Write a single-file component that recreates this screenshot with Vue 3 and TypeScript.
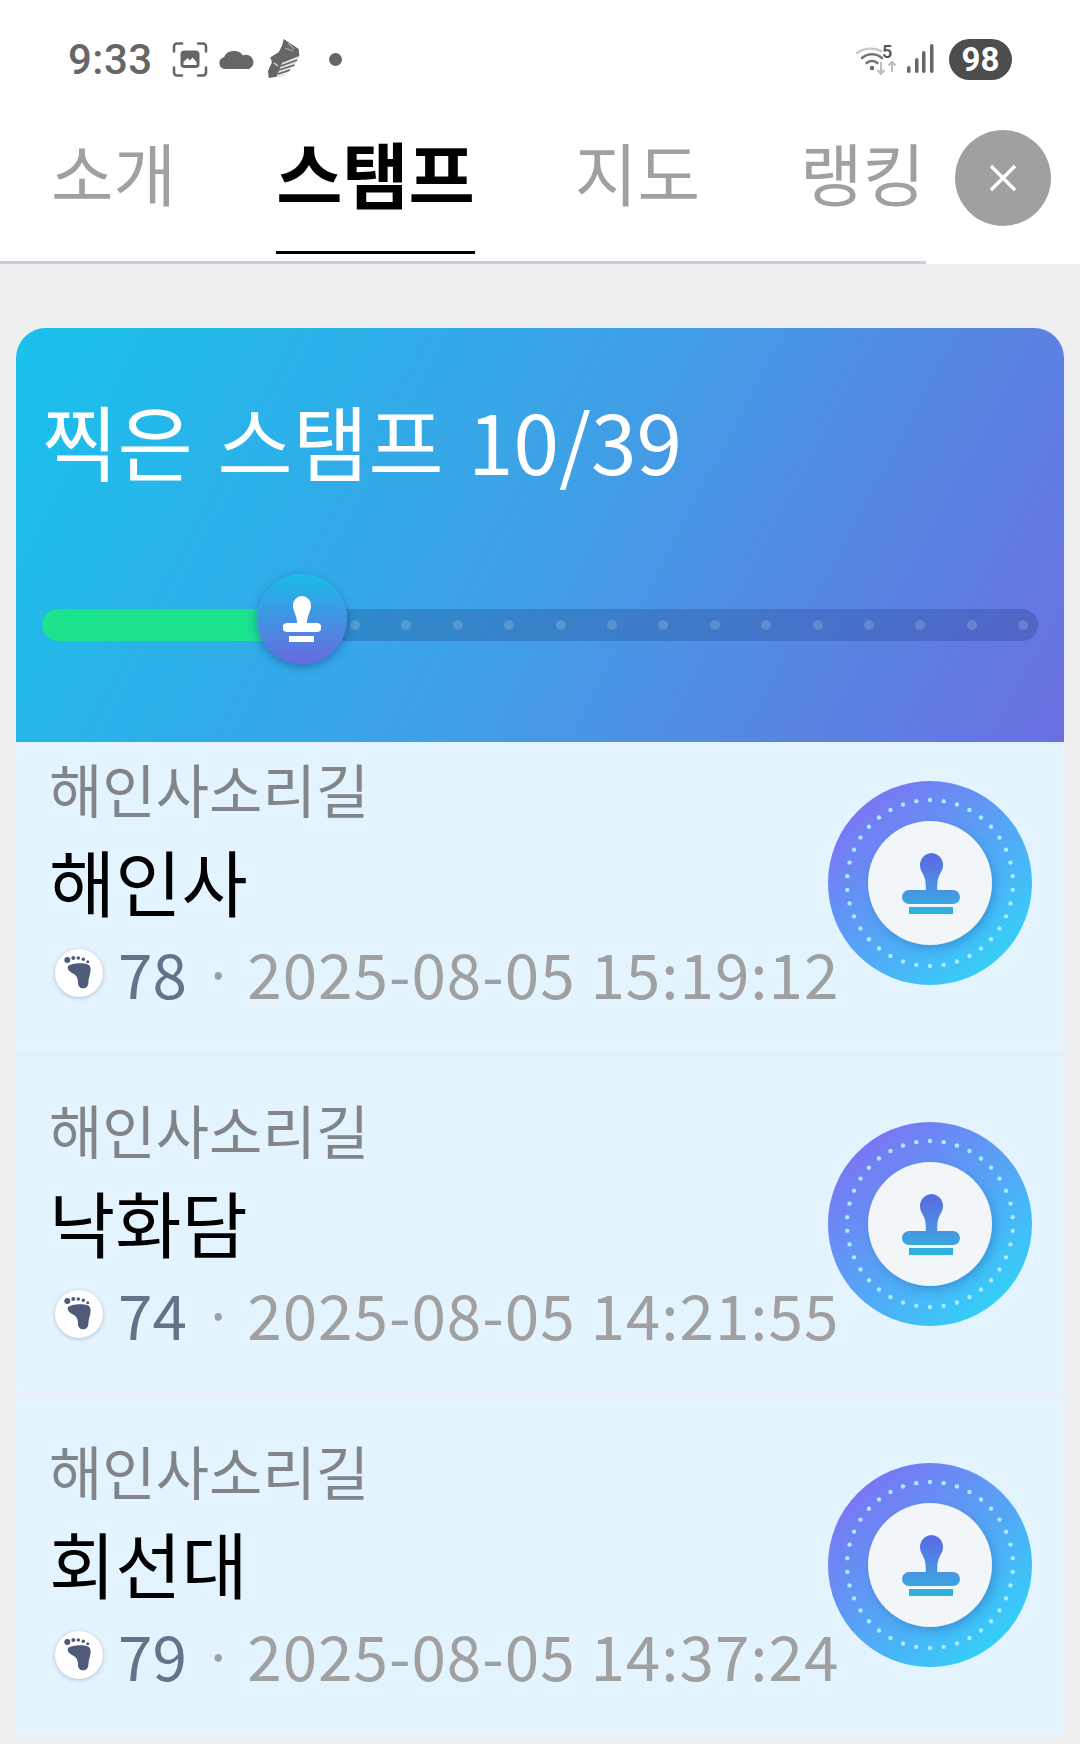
<script setup lang="ts">
const items = [
  { title: '해인사', num: 78, date: '2025-08-05 15:19:12' },
  { title: '낙화담', num: 74, date: '2025-08-05 14:21:55' },
  { title: '회선대', num: 79, date: '2025-08-05 14:37:24' },
]
const tabs = ['소개', '스탬프', '지도', '랭킹']
const trackDots = Array.from({ length: 14 }, (_, i) => i)
const ringDots = Array.from({ length: 38 }, (_, i) => {
  const a = (i / 38) * Math.PI * 2
  return { x: 102 + 83 * Math.sin(a), y: 102 - 83 * Math.cos(a) }
})
</script>

<template>
  <div class="page">
    <header class="top">
      <div class="status">
        <span class="clock">9:33</span>
        <svg class="ic-scan" viewBox="0 0 36 36" width="36" height="37">
          <g fill="none" stroke="#666" stroke-width="2.6" stroke-linecap="round">
            <path d="M2 10V5a3 3 0 0 1 3-3h5M26 2h5a3 3 0 0 1 3 3v5M34 26v5a3 3 0 0 1-3 3h-5M10 34H5a3 3 0 0 1-3-3v-5" />
          </g>
          <rect x="8.500" y="9" width="19" height="17.500" rx="4" fill="#666" />
          <path d="M11.500 23.500v-3l4-4 2.500 2.500 2.500-3 4 4.500v3z" fill="#fff" />
        </svg>
        <svg class="ic-cloud" viewBox="0 0 36 20" width="36" height="20">
          <path d="M6 20a6 6 0 0 1-1-11.800A10.500 9 0 0 1 24 6.500a7 7 0 0 1 6 13.500z" fill="#666" />
        </svg>
        <svg class="ic-shoe" viewBox="0 0 32 40" width="32" height="40">
          <path d="M15.700 0L30.700 10L31.300 16.700L25.700 26.700L15.700 36.700L.7 39L0 31.700L4 23.300L2.300 18.300L10.700 13.300L14 6.700z" fill="#666" />
          <path d="M14 24L31 17L26 27L16 37L8 39z" fill="#e6e6e6" />
          <path d="M13 27L29 21M11 31L26.500 26M10 35L22 31" stroke="#666" stroke-width="1.800" />
          <path d="M6 24l4 3" stroke="#ddd" stroke-width="1.200" />
          <path d="M20 4l6 6M17 9l8 3" stroke="#aaa" stroke-width="1.200" />
        </svg>
        <span class="dot"></span>
        <span class="spring"></span>
        <svg class="ic-wifi" viewBox="0 -4 40 42" width="40" height="42">
          <g fill="none" stroke-linecap="round">
            <path d="M1 11a24 24 0 0 1 24-2" stroke="#c9c9c9" stroke-width="2.600" />
            <path d="M6 16a15 15 0 0 1 20 0" stroke="#777" stroke-width="2.600" />
            <path d="M10.500 21a9 9 0 0 1 11 0" stroke="#777" stroke-width="2.600" />
          </g>
          <circle cx="16" cy="26" r="2.200" fill="#666" />
          <text x="26" y="16" class="five">5</text>
          <path d="M25 20v12m-3.500-4 3.500 4 3.500-4" stroke="#bdbdbd" stroke-width="2" fill="none" />
          <path d="M36 30V20m-3.500 3.500 3.500-3.500 3.500 3.500" stroke="#bdbdbd" stroke-width="2" fill="none" />
        </svg>
        <svg class="ic-signal" viewBox="0 0 28 30" width="28" height="30">
          <rect x="1" y="22" width="3.500" height="7" rx="1.700" fill="#666" />
          <rect x="9" y="14" width="3.500" height="15" rx="1.700" fill="#666" />
          <rect x="16" y="7" width="3.500" height="22" rx="1.700" fill="#666" />
          <rect x="24" y="0" width="3.500" height="29" rx="1.700" fill="#666" />
        </svg>
        <span class="battery">98</span>
      </div>
      <nav class="tabs">
        <span v-for="(t, i) in tabs" :key="t" class="tab" :class="{ active: i === 1 }">{{ t }}</span>
      </nav>
      <button class="close" aria-label="닫기">
        <svg viewBox="0 0 32 32" width="32" height="32">
          <path d="M4 4l24 24M28 4L4 28" stroke="#fff" stroke-width="3.400" />
        </svg>
      </button>
    </header>

    <main class="main">
      <section class="summary">
        <h1 class="summary-title">찍은 스탬프 10/39</h1>
        <div class="track">
          <div class="fill"></div>
          <div class="track-dots">
            <i v-for="d in trackDots" :key="d"></i>
          </div>
          <div class="thumb">
            <svg viewBox="0 0 38 46" width="38" height="46">
              <path d="M19 0a9 9 0 0 1 9 9c0 7-4 10-4 18h10a4.500 4.500 0 0 1 0 9H4a4.500 4.500 0 0 1 0-9h10c0-8-4-11-4-18a9 9 0 0 1 9-9z" fill="#fff" />
              <rect x="6" y="40" width="25" height="6" fill="#fff" />
            </svg>
          </div>
        </div>
      </section>

      <ul class="list">
        <li v-for="it in items" :key="it.title" class="row">
          <div class="text">
            <p class="sub">해인사소리길</p>
            <p class="title">{{ it.title }}</p>
            <p class="meta">
              <span class="foot">
                <svg viewBox="0 0 48 48" width="48" height="48">
                  <g fill="#4f5b78">
                    <circle cx="12.300" cy="11" r="3" />
                    <circle cx="18.300" cy="9" r="2" />
                    <circle cx="23.300" cy="9" r="1.800" />
                    <circle cx="28.300" cy="10.300" r="1.700" />
                    <circle cx="32.700" cy="12.700" r="1.500" />
                    <path d="M13 17C16 14 30 13 34 16C37 19 35 25 34 29C33 33 34 38 30 39C26 40 23 38 23 34C23 28 21 26 17 24C14 22 12 20 13 17z" />
                  </g>
                </svg>
              </span>
              <span class="num">{{ it.num }}</span>
              <span class="sep">·</span>
              <span class="date">{{ it.date }}</span>
            </p>
          </div>
          <svg class="badge" viewBox="0 0 204 204" width="204" height="204">
            <defs>
              <linearGradient id="ring" x1="0.150" y1="0.100" x2="0.850" y2="0.900">
                <stop offset="0" stop-color="#7b74f3" />
                <stop offset="1" stop-color="#33d1f8" />
              </linearGradient>
              <linearGradient id="stamp" gradientUnits="userSpaceOnUse" x1="103" y1="72" x2="103" y2="133">
                <stop offset="0" stop-color="#5b69e2" />
                <stop offset="0.600" stop-color="#4a93e2" />
                <stop offset="1" stop-color="#2bb6dc" />
              </linearGradient>
              <filter id="soft" x="-20%" y="-20%" width="140%" height="140%">
                <feDropShadow dx="3" dy="4" stdDeviation="5" flood-color="#2a4fa8" flood-opacity="0.350" />
              </filter>
            </defs>
            <circle cx="102" cy="102" r="102" fill="url(#ring)" />
            <circle v-for="(p, i) in ringDots" :key="i" :cx="p.x" :cy="p.y" r="2.200" fill="#a9ecfc" />
            <circle cx="102" cy="102" r="62" fill="#f2f6f9" filter="url(#soft)" />
            <path d="M103 72a12 12 0 0 1 12 12c0 6-3.500 8-5 14-.7 3-.8 6-.8 11H125a7 7 0 0 1 0 14H81a7 7 0 0 1 0-14h16.800c0-5-.1-8-.8-11-1.500-6-5-8-5-14a12 12 0 0 1 12-12z" fill="url(#stamp)" />
            <rect x="81" y="126" width="44" height="7" fill="url(#stamp)" />
          </svg>
        </li>
      </ul>
    </main>
  </div>
</template>

<style>
html, body { margin: 0; background: #edeff1; }
</style>

<style scoped>
.page {
  width: 1080px;
  height: 1744px;
  overflow: hidden;
  background: #edeff1;
  font-family: "Noto Sans CJK KR", "Noto Sans", sans-serif;
  position: relative;
}
.top {
  background: #fff;
  position: relative;
  height: 264px;
}
.status {
  display: flex;
  align-items: center;
  height: 118px;
  padding: 0 68px 0 68px;
  box-sizing: border-box;
}
.clock {
  font-family: Roboto, sans-serif;
  font-weight: 500;
  font-size: 42px;
  color: #666;
  letter-spacing: 0.5px;
  width: 104px;
}
.ic-cloud { margin-left: 11px; }
.ic-shoe { margin-left: 13px; }
.dot {
  width: 13px;
  height: 13px;
  border-radius: 50%;
  background: #666;
  margin-left: 29px;
}
.spring { flex: 1; }
.five {
  font: 600 18px Roboto, sans-serif;
  fill: #555;
}
.ic-signal { margin-left: 10px; }
.battery {
  margin-left: 15px;
  width: 63px;
  height: 41px;
  border-radius: 21px;
  background: #4d4d4d;
  color: #fff;
  font: 700 33px/41px Roboto, sans-serif;
  text-align: center;
}
.tabs {
  display: flex;
  width: 926px;
  height: 146px;
  box-sizing: border-box;
  border-bottom: 3px solid #cfccd9;
  padding-left: 51px;
  gap: 100px;
}
.tab {
  font-size: 68px;
  line-height: 86px;
  color: #a0a0a0;
  height: 136px;
  box-sizing: border-box;
  padding-top: 11px;
  white-space: nowrap;
}
.tab.active {
  color: #000;
  font-size: 72px;
  font-weight: 700;
  border-bottom: 3px solid #000;
}
.close {
  position: absolute;
  left: 955px;
  top: 130px;
  width: 96px;
  height: 96px;
  border: 0;
  border-radius: 50%;
  background: #a0a0a0;
  display: flex;
  align-items: center;
  justify-content: center;
  padding: 0;
}
.main { padding: 64px 16px 0; }
.summary {
  position: relative;
  z-index: 2;
  height: 414px;
  border-radius: 30px 30px 0 0;
  background: linear-gradient(118deg, #18c2ec 0%, #3fa0e6 50%, #6b6fe1 100%);
  box-sizing: border-box;
  padding: 0 26px;
  display: flex;
  flex-direction: column;
}
.summary-title {
  margin: 0;
  padding-top: 47px;
  height: 250px;
  box-sizing: border-box;
  color: #fff;
  font-size: 82px;
  line-height: 130px;
  font-weight: 400;
  word-spacing: 6px;
  white-space: nowrap;
}
.track {
  position: relative;
  height: 32px;
  margin-top: 31px;
  border-radius: 16px;
  background: rgba(30, 60, 130, 0.28);
}
.fill {
  position: absolute;
  left: 0;
  top: 0;
  bottom: 0;
  width: 240px;
  border-radius: 16px 0 0 16px;
  background: #1be38e;
}
.track-dots {
  position: absolute;
  left: 308px;
  top: 11px;
  display: flex;
  gap: 41.400px;
}
.track-dots i {
  width: 10px;
  height: 10px;
  border-radius: 50%;
  background: rgba(255, 255, 255, 0.16);
}
.thumb {
  position: absolute;
  left: 215px;
  top: -35px;
  width: 90px;
  height: 90px;
  border-radius: 50%;
  background: linear-gradient(180deg, #1bbde6, #6a69df);
  box-shadow: 0 3px 10px rgba(20, 50, 120, 0.45);
  display: flex;
  align-items: center;
  justify-content: center;
}
.list {
  list-style: none;
  margin: -27px 0 0;
  padding: 0;
  background: #fbfcfd;
}
.row {
  position: relative;
  height: 341px;
  box-sizing: border-box;
  background: #e3f4ff;
  border-bottom: 3px solid #e8f0f6;
  padding: 0 0 9px 33px;
  display: flex;
  align-items: center;
}
.text { flex: 1; min-width: 0; }
.text p { margin: 0; white-space: nowrap; }
.text .sub {
  font-size: 58px;
  line-height: 84px;
  color: #828588;
}
.title {
  font-size: 72px;
  line-height: 100px;
  color: #000;
}
.text .meta {
  display: flex;
  align-items: center;
  font-size: 62px;
  line-height: 82px;
  margin-top: 1px;
  color: #a0a0a0;
}
.foot {
  width: 48px;
  height: 48px;
  margin: 2px 0 0 6px;
  border-radius: 50%;
  background: #fff;
  box-shadow: 0 1px 4px rgba(60, 70, 100, 0.3);
  display: flex;
  align-items: center;
  justify-content: center;
}
.num { color: #66728a; margin-left: 15px; }
.sep { margin: 0 13px 0 16px; font-size: 56px; }
.date { letter-spacing: 1px; }
.badge {
  position: absolute;
  left: 812px;
  top: 66px;
}
</style>
